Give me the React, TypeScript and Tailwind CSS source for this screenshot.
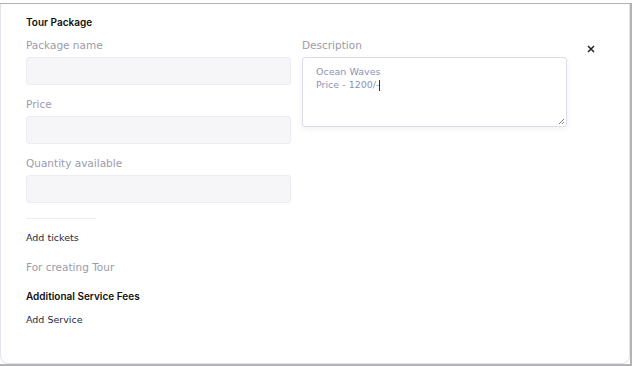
import React from 'react';

const font = { fontFamily: '"DejaVu Sans", "Noto Sans", sans-serif' };
const heading = { fontFamily: 'Inter, "Noto Sans", sans-serif' };

const Field: React.FC<{ label: string }> = ({ label }) => (
  <div className="flex flex-col">
    <label className="text-[10.5px] leading-[14px] text-[#9b9bab] mb-[5px]">{label}</label>
    <div className="h-[28px] w-[265px] rounded-[3px] border border-[#ececf3] bg-[#f6f6f8]" />
  </div>
);

export default function App() {
  return (
    <div className="w-[632px] h-[367px] bg-white overflow-hidden" style={font}>
      <div className="mt-[3px] h-[363px] border-t border-r-2 border-b-2 border-[#b3b3b3] flex">
        <div className="flex-1 border border-t-0 border-[#e3e3ee] rounded-b-lg relative pl-[25px] pt-[11px]">
          <h2 className="text-[10px] leading-[14px] font-semibold text-[#111]" style={heading}>Tour Package</h2>
          <div className="flex gap-[11px] mt-[9px]">
            <div className="flex flex-col gap-[12px]">
              <Field label="Package name" />
              <Field label="Price" />
              <Field label="Quantity available" />
            </div>
            <div className="flex flex-col">
              <label className="text-[10.5px] leading-[14px] text-[#9b9bab] mb-[5px]">Description</label>
              <div className="h-[70px] w-[265px] rounded-[3px] border border-[#dcdcea] bg-white shadow-[0_2px_6px_rgba(0,0,0,0.06)] px-[13px] pt-[7px] text-[9.5px] leading-[13px] text-[#8a93b8] relative">
                <div>Ocean Waves</div>
                <div>Price - 1200/-<span className="inline-block w-px h-[11px] bg-[#333] align-middle" /></div>
                <svg className="absolute right-[1px] bottom-[1px]" width="7" height="7" viewBox="0 0 7 7">
                  <path d="M6 1L1 6M6 4L4 6" stroke="#777" strokeWidth="1" />
                </svg>
              </div>
            </div>
          </div>
          <div className="w-[70px] h-px bg-[#ececf2] mt-[15px]" />
          <div className="mt-[12px] text-[9.5px] leading-[13px] text-[#1d2a44]">Add tickets</div>
          <div className="mt-[16px] text-[10.5px] leading-[14px] text-[#9b9bab]">For creating Tour</div>
          <div className="mt-[15px] text-[10px] leading-[14px] font-semibold text-[#111]" style={heading}>Additional Service Fees</div>
          <div className="mt-[10px] text-[9.5px] leading-[13px] text-[#1d2a44]">Add Service</div>
          <svg className="absolute left-[586px] top-[41px]" width="8" height="8" viewBox="0 0 8 8">
            <path d="M1 1L7 7M7 1L1 7" stroke="#222" strokeWidth="1.5" />
          </svg>
        </div>
      </div>
    </div>
  );
}
